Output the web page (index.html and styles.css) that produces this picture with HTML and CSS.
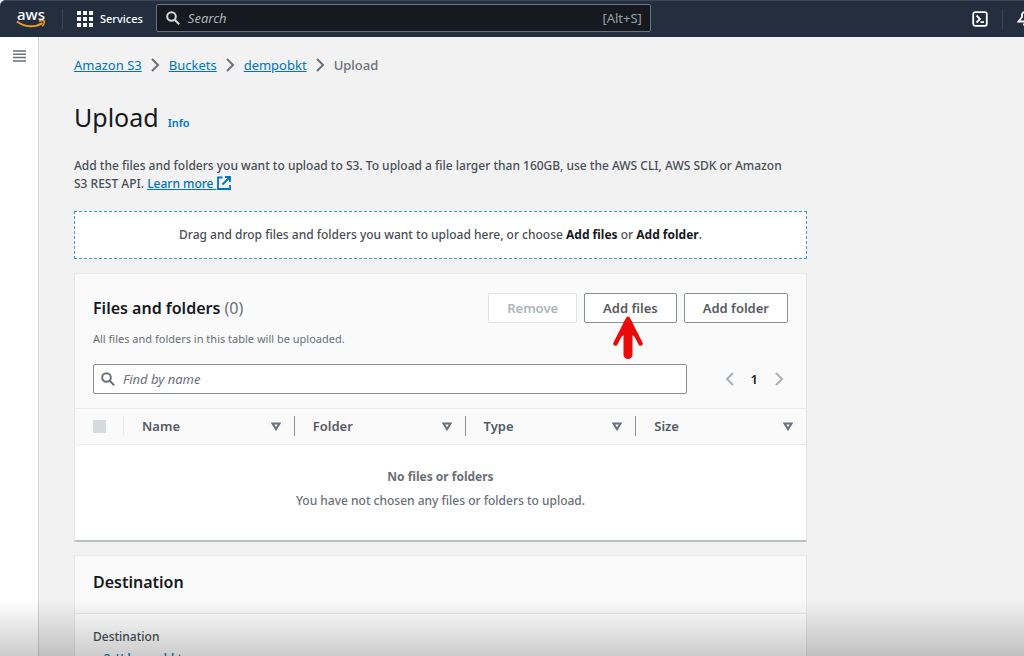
FILE: index.html
```html
<!DOCTYPE html>
<html lang="en">
<head>
<meta charset="utf-8">
<title>Upload - Amazon S3</title>
<link rel="stylesheet" href="styles.css">
</head>
<body>
<header class="topbar">
  <a class="logo" href="#" aria-label="AWS home">
    <span class="logo-word">aws</span>
    <svg class="logo-smile" width="30" height="9" viewBox="0 0 30 9"><path d="M1 1.500C9 7.500 19 7.800 26.500 3.200" fill="none" stroke="#f09a1d" stroke-width="2"/><path d="M23 1.200c2-.8 4.500-.8 5.200-.1.500 1-.4 3.600-1.800 5" fill="none" stroke="#f09a1d" stroke-width="1.500"/></svg>
  </a>
  <button class="services" type="button">
    <svg width="16" height="16" viewBox="0 0 16 16" fill="#fff"><path d="M0 0h4v4H0zM6 0h4v4H6zM12 0h4v4h-4zM0 6h4v4H0zM6 6h4v4H6zM12 6h4v4h-4zM0 12h4v4H0zM6 12h4v4H6zM12 12h4v4h-4z"/></svg>
    Services
  </button>
  <label class="global-search">
    <svg width="14" height="14" viewBox="0 0 14 14" fill="none" stroke="#d5dbdb" stroke-width="2"><circle cx="5.500" cy="5.500" r="4.300"/><path d="M8.700 8.700l4.500 4.500"/></svg>
    <input type="search" placeholder="Search" aria-label="Search">
    <span class="shortcut">[Alt+S]</span>
  </label>
  <div class="tools">
    <button class="tool" type="button" aria-label="CloudShell">
      <svg width="16" height="16" viewBox="0 0 16 16" fill="none" stroke="#fff" stroke-width="1.800"><rect x="1.200" y="1.200" width="13.600" height="13.600" rx="2"/><path d="M4.500 4.500L8 8l-3.500 3.500M8.500 11.200h3.500"/></svg>
    </button>
    <button class="tool bell" type="button" aria-label="Notifications">
      <svg width="16" height="16" viewBox="0 0 16 16" fill="none" stroke="#fff" stroke-width="1.800"><path d="M1.500 10.500L5 6V4c0-4 6-4 6 0v2l3.500 4.500zM6 13.500h4"/></svg>
    </button>
  </div>
</header>
<div class="shell">
  <nav class="rail" aria-label="Service navigation">
    <button class="menu" type="button" aria-label="Open navigation">
      <svg width="14" height="12" viewBox="0 0 14 12" stroke="#687078" stroke-width="1.500"><path d="M0 1h13M0 4.300h13M0 7.600h13M0 10.900h13"/></svg>
    </button>
  </nav>
  <main class="content">
    <nav class="crumbs" aria-label="Breadcrumbs">
      <a href="#">Amazon S3</a>
      <svg class="sep" width="9" height="14" viewBox="0 0 9 14"><path d="M1 1l6 6-6 6"/></svg>
      <a href="#">Buckets</a>
      <svg class="sep" width="9" height="14" viewBox="0 0 9 14"><path d="M1 1l6 6-6 6"/></svg>
      <a href="#">dempobkt</a>
      <svg class="sep" width="9" height="14" viewBox="0 0 9 14"><path d="M1 1l6 6-6 6"/></svg>
      <span class="here">Upload</span>
    </nav>
    <div class="title">
      <h1>Upload</h1>
      <a class="info" href="#">Info</a>
    </div>
    <p class="intro">Add the files and folders you want to upload to S3. To upload a file larger than 160GB, use the AWS CLI, AWS SDK or Amazon S3 REST API. <a href="#">Learn more <svg class="external" width="14" height="14" viewBox="0 0 14 14" fill="none" stroke="#0073bb" stroke-width="1.800"><path d="M5.500 1.500H1v11.500h12V9M8 1h5v5M13 1L5.500 8.500"/></svg></a></p>
    <div class="dropzone">Drag and drop files and folders you want to upload here, or choose <strong>Add files</strong> or <strong>Add folder</strong>.</div>
    <section class="card">
      <div class="card-head">
        <div class="head-row">
          <h2>Files and folders <span class="count">(0)</span></h2>
          <div class="actions">
            <button class="btn" type="button" disabled>Remove</button>
            <button class="btn pointed" type="button">Add files
              <svg class="pointer" width="30" height="44" viewBox="0 0 30 44"><path d="M15 8v30.500" stroke="#eb0a0a" stroke-width="9" stroke-linecap="round"/><path d="M15 3L2.500 27.500M15 3l12.500 24.500" stroke="#eb0a0a" stroke-width="4.500" stroke-linecap="round"/><path d="M15 2L5 23l10-7 10 7z" fill="#eb0a0a"/></svg>
            </button>
            <button class="btn" type="button">Add folder</button>
          </div>
        </div>
        <p class="note">All files and folders in this table will be uploaded.</p>
        <div class="filter-row">
          <label class="filter">
            <svg width="14" height="14" viewBox="0 0 14 14" fill="none" stroke="#687078" stroke-width="2"><circle cx="5.500" cy="5.500" r="4.300"/><path d="M8.700 8.700l4.500 4.500"/></svg>
            <input type="search" placeholder="Find by name" aria-label="Find by name">
          </label>
          <div class="pages">
            <button type="button" aria-label="Previous page"><svg width="9" height="14" viewBox="0 0 9 14"><path d="M8 1L2 7l6 6"/></svg></button>
            <span class="page">1</span>
            <button type="button" aria-label="Next page"><svg width="9" height="14" viewBox="0 0 9 14"><path d="M1 1l6 6-6 6"/></svg></button>
          </div>
        </div>
      </div>
      <table class="files">
        <thead>
          <tr>
            <th class="pick"><input type="checkbox" aria-label="Select all" disabled></th>
            <th><div class="cell">Name <svg width="10" height="9" viewBox="0 0 10 9"><path d="M1.500 1.500h7L5 7.200z"/></svg></div></th>
            <th><div class="cell">Folder <svg width="10" height="9" viewBox="0 0 10 9"><path d="M1.500 1.500h7L5 7.200z"/></svg></div></th>
            <th><div class="cell">Type <svg width="10" height="9" viewBox="0 0 10 9"><path d="M1.500 1.500h7L5 7.200z"/></svg></div></th>
            <th><div class="cell">Size <svg width="10" height="9" viewBox="0 0 10 9"><path d="M1.500 1.500h7L5 7.200z"/></svg></div></th>
          </tr>
        </thead>
        <tbody>
          <tr><td colspan="5"><strong>No files or folders</strong>You have not chosen any files or folders to upload.</td></tr>
        </tbody>
      </table>
    </section>
    <section class="card destination">
      <div class="card-head"><h2>Destination</h2></div>
      <div class="card-body">
        <div>Destination</div>
        <a href="#">s3://dempobkt</a>
      </div>
    </section>
  </main>
</div>
<div class="shade"></div>
</body>
</html>
```
FILE: styles.css
```css
* { box-sizing: border-box; }
body {
  margin: 0;
  height: 100vh;
  overflow: hidden;
  display: flex;
  flex-direction: column;
  background: #f2f2f2;
  color: #484e56;
  font: 13px/18px "Noto Sans", sans-serif;
}
h1, h2, p { margin: 0; }
button, input { font: inherit; color: inherit; }
button { padding: 0; border: 0; background: none; }
a { color: #0073bb; }
svg { flex: none; }

.topbar {
  flex: none;
  display: flex;
  align-items: center;
  height: 37px;
  background: #232f3e;
  color: #fff;
  box-shadow: inset 0 1px #3b4654;
  border-radius: 6px 0 0 0;
}
.logo {
  display: flex;
  flex-direction: column;
  align-items: center;
  width: 62px;
  color: #fff;
  text-decoration: none;
}
.logo-word { font-size: 15px; line-height: 12px; font-weight: 500; }
.services {
  display: flex;
  align-items: center;
  gap: 7px;
  height: 20px;
  padding: 0 13px 0 14px;
  border-left: 1px solid #3b4654;
  font-size: 11px;
  font-weight: 500;
}
.global-search {
  display: flex;
  align-items: center;
  gap: 8px;
  width: 495px;
  height: 28px;
  margin-bottom: 1px;
  padding: 0 8px 0 9px;
  border: 1px solid #687078;
  border-radius: 2px;
  background: #16191f;
}
.global-search input, .filter input {
  flex: 1;
  min-width: 0;
  padding: 0;
  border: 0;
  outline: 0;
  background: none;
}
input::placeholder { color: #687078; opacity: 1; font-style: italic; }
.global-search input::placeholder { color: #aab7b8; }
.shortcut { color: #95a0a0; }
.tools { display: flex; margin-left: auto; height: 20px; overflow: hidden; }
.tool { display: flex; align-items: center; padding-right: 14px; }
.bell { border-left: 1px solid #3b4654; padding: 0 0 0 14px; width: 22px; }

.shell { flex: 1; min-height: 0; display: flex; }
.rail {
  flex: none;
  width: 39px;
  padding: 13px 0 0 13px;
  background: #fff;
  border-right: 1px solid #d0d3d5;
}
.menu { display: block; }
.menu svg { display: block; }
.content { flex: 1; min-width: 0; padding: 19px 217px 0 35px; }

.crumbs { display: flex; align-items: center; gap: 9px; }
.sep { fill: none; stroke: #687078; stroke-width: 2; }
.here { font-weight: 500; color: #687078; }
.title { display: flex; align-items: baseline; gap: 9px; margin: 25px 0 22px; }
h1 { font-size: 25px; line-height: 36px; font-weight: 400; color: #16191f; }
.info { font-size: 11px; font-weight: 600; text-decoration: none; }
.intro, .dropzone, .files td, .card-body { font-size: 12px; font-weight: 500; }
.intro { padding-right: 14px; }
.external { vertical-align: -2px; }
.dropzone {
  margin: 18px 0 14px;
  padding: 14px;
  border: 1px dashed #2f9fd6;
  background: #fff;
  text-align: center;
}
.dropzone strong { font-weight: 700; color: #16191f; }

.card {
  margin-bottom: 13px;
  background: #fff;
  border: 1px solid #e3e6e6;
  border-top-color: #eaeded;
  border-bottom: 2px solid #b9c3c5;
}
.card-head { padding: 19px 18px 14px; background: #fafafa; border-bottom: 1px solid #eaeded; }
.head-row { display: flex; justify-content: space-between; align-items: center; }
h2 { font-size: 16px; line-height: 22px; font-weight: 600; color: #16191f; }
.count { font-weight: 400; color: #687078; }
.actions { display: flex; gap: 7px; }
.btn {
  height: 30px;
  padding: 0 18px;
  border: 1px solid #879196;
  border-radius: 2px;
  background: #fff;
  color: #545b64;
  font-weight: 600;
}
.btn:disabled { border-color: #e0e3e5; color: #aab7b8; }
.pointed { position: relative; }
.pointer { position: absolute; left: 28px; top: 22px; }
.note { margin: 7px 0 16px; font-size: 11px; color: #687078; }
.filter-row { display: flex; align-items: center; gap: 38px; }
.filter {
  flex: 1;
  display: flex;
  align-items: center;
  gap: 8px;
  height: 30px;
  padding: 0 7px;
  border: 1px solid #879196;
  border-radius: 2px;
  background: #fff;
}
.pages { display: flex; align-items: center; gap: 17px; padding-right: 4px; }
.pages button, .pages svg { display: block; }
.pages svg { fill: none; stroke: #aab0b5; stroke-width: 2; }
.page { font-weight: 600; color: #16191f; }

.files { width: 100%; border-collapse: collapse; table-layout: fixed; }
.files th { height: 35px; padding: 0; background: #fafafa; border-bottom: 1px solid #eaeded; text-align: left; font-weight: 600; color: #545b64; }
.files .pick { width: 48px; padding-left: 18px; }
.pick input { appearance: none; display: block; width: 13px; height: 13px; margin: 0; background: #d5dbdb; border-radius: 1px; }
.cell { display: flex; justify-content: space-between; align-items: center; height: 20px; padding: 0 13px 0 18px; border-left: 1px solid #879196; }
.pick + th .cell { border-color: #eaeded; }
.cell svg { fill: none; stroke: #687078; stroke-width: 2; }
.files td { padding: 20px 18px 27px; text-align: center; line-height: 24px; color: #687078; }
.files td strong { display: block; font-weight: 700; }
.destination .card-head { padding: 15px 18px 20px; }
.card-body { display: grid; gap: 4px; padding: 14px 18px; }
.card-body a { padding-left: 5px; }

.shade {
  position: fixed;
  inset: auto 0 0;
  height: 56px;
  background: linear-gradient(rgba(0, 0, 0, 0), rgba(0, 0, 0, 0.2));
  pointer-events: none;
}
```
